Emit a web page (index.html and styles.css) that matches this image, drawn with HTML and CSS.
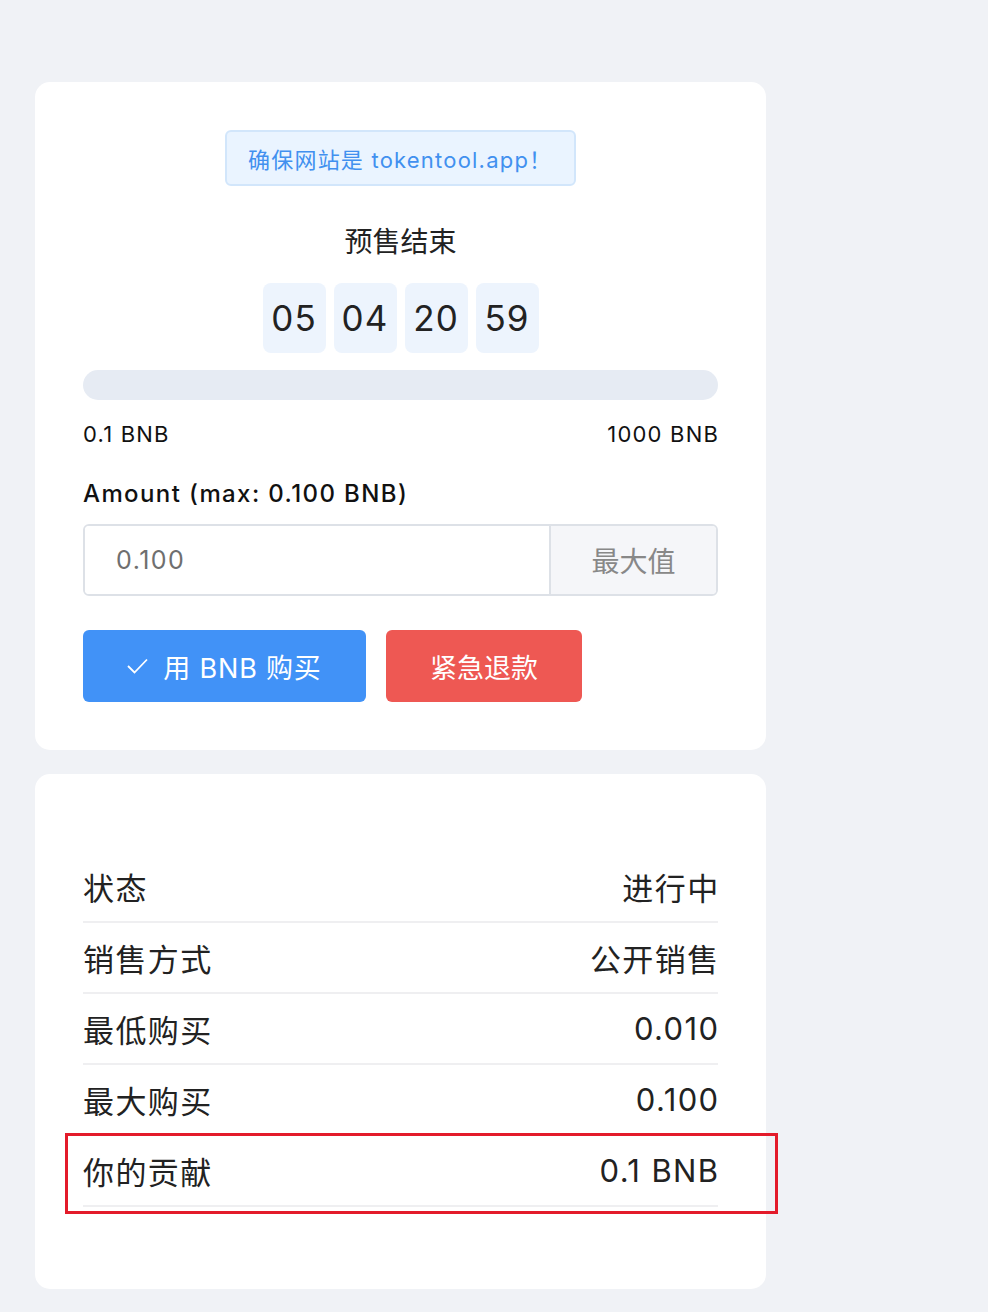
FILE: index.html
```html
<!DOCTYPE html>
<html lang="zh">
<head>
<meta charset="utf-8">
<link rel="stylesheet" href="styles.css">
</head>
<body>
<div class="page">
  <section class="card card-buy">
    <div class="notice">确保网站是 tokentool.app！</div>
    <div class="ended">预售结束</div>
    <div class="countdown">
      <div class="cd-box">05</div>
      <div class="cd-box">04</div>
      <div class="cd-box">20</div>
      <div class="cd-box">59</div>
    </div>
    <div class="progress"></div>
    <div class="range">
      <span>0.1 BNB</span>
      <span class="end">1000 BNB</span>
    </div>
    <div class="amount-label">Amount (max: 0.100 BNB)</div>
    <div class="input-group">
      <input class="amount-input" type="text" placeholder="0.100">
      <div class="addon">最大值</div>
    </div>
    <div class="actions">
      <button class="btn btn-blue">
        <svg class="check" width="21" height="16" viewBox="0 0 21 16"><path d="M1 8 L7.5 14.5 L20 1.5" fill="none" stroke="#fff" stroke-width="1.8"/></svg>
        <span>用 BNB 购买</span>
      </button>
      <button class="btn btn-red">紧急退款</button>
    </div>
  </section>
  <section class="card card-info">
    <div class="row"><span>状态</span><span class="end">进行中</span></div>
    <div class="row"><span>销售方式</span><span class="end">公开销售</span></div>
    <div class="row"><span>最低购买</span><span class="end">0.010</span></div>
    <div class="row"><span>最大购买</span><span class="end">0.100</span></div>
    <div class="row row-mark"><span>你的贡献</span><span class="end">0.1 BNB</span><div class="mark"></div></div>
  </section>
</div>
</body>
</html>
```
FILE: styles.css
```css
html, body {
  margin: 0;
  padding: 0;
  background: #f0f2f6;
}
body {
  font-family: "Inter", "Noto Sans CJK SC", sans-serif;
  color: #222;
}
.page {
  width: 731px;
  margin-left: 35px;
  padding-top: 82px;
  display: flex;
  flex-direction: column;
  gap: 24px;
}
.card {
  background: #fff;
  border-radius: 15px;
  padding: 48px;
  box-sizing: border-box;
}
.card-buy {
  height: 668px;
  display: flex;
  flex-direction: column;
  align-items: center;
}
.notice {
  width: 351px;
  height: 56px;
  box-sizing: border-box;
  border: 2px solid #d2e6fb;
  background: #eaf4ff;
  border-radius: 6px;
  color: #4190ef;
  font-size: 22px;
  letter-spacing: 0.055em;
  display: flex;
  align-items: center;
  padding-left: 21px;
}
.ended {
  margin-top: 40px;
  font-size: 28px;
  line-height: 32px;
  color: #222;
}
.countdown {
  margin-top: 25px;
  display: flex;
  gap: 8px;
}
.cd-box {
  width: 63px;
  height: 70px;
  border-radius: 8px;
  background: #edf4fd;
  display: flex;
  align-items: center;
  justify-content: center;
  font-size: 35px;
  letter-spacing: 0.03em;
  color: #222;
}
.progress {
  margin-top: 17px;
  align-self: stretch;
  height: 30px;
  border-radius: 15px;
  background: #e6ebf3;
}
.range {
  align-self: stretch;
  margin-top: 22px;
  display: flex;
  justify-content: space-between;
  font-size: 22px;
  line-height: 24px;
  letter-spacing: 0.055em;
  color: #111;
}
.end {
  margin-right: -0.05em;
}
.amount-label {
  align-self: stretch;
  margin-top: 34px;
  font-size: 24px;
  line-height: 28px;
  font-weight: 500;
  letter-spacing: 0.058em;
  color: #111;
}
.input-group {
  align-self: stretch;
  margin-top: 16px;
  height: 72px;
  display: flex;
  border: 2px solid #dde1e7;
  border-radius: 6px;
  box-sizing: border-box;
  overflow: hidden;
}
.amount-input {
  flex: 1;
  min-width: 0;
  border: none;
  outline: none;
  padding: 0 0 0 31px;
  font-family: "Inter", "Noto Sans CJK SC", sans-serif;
  font-size: 25px;
  letter-spacing: 0.06em;
  color: #222;
  background: #fff;
}
.amount-input::placeholder {
  color: #6f6f6f;
}
.addon {
  width: 165px;
  border-left: 2px solid #dde1e7;
  background: #f5f6f9;
  color: #888;
  font-size: 28px;
  display: flex;
  align-items: center;
  justify-content: center;
}
.actions {
  align-self: stretch;
  margin-top: 34px;
  display: flex;
  gap: 20px;
}
.btn {
  height: 72px;
  border: none;
  border-radius: 6px;
  color: #fff;
  font-family: "Inter", "Noto Sans CJK SC", sans-serif;
  font-size: 27px;
  display: flex;
  align-items: center;
  justify-content: center;
  padding: 0;
}
.btn-blue {
  width: 283px;
  background: #4192f7;
  gap: 15px;
  letter-spacing: 0.03em;
}
.btn-red {
  width: 196px;
  background: #ee5853;
}
.card-info {
  padding: 78px 48px 82px;
}
.row {
  position: relative;
  height: 71px;
  box-sizing: border-box;
  border-bottom: 2px solid #efeff1;
  display: flex;
  justify-content: space-between;
  align-items: center;
  font-size: 31px;
  letter-spacing: 0.045em;
  color: #222;
  padding-top: 0;
}
.mark {
  position: absolute;
  left: -18px;
  right: -60px;
  top: -3px;
  bottom: -9px;
  border: 3px solid #e31b2a;
}
```
